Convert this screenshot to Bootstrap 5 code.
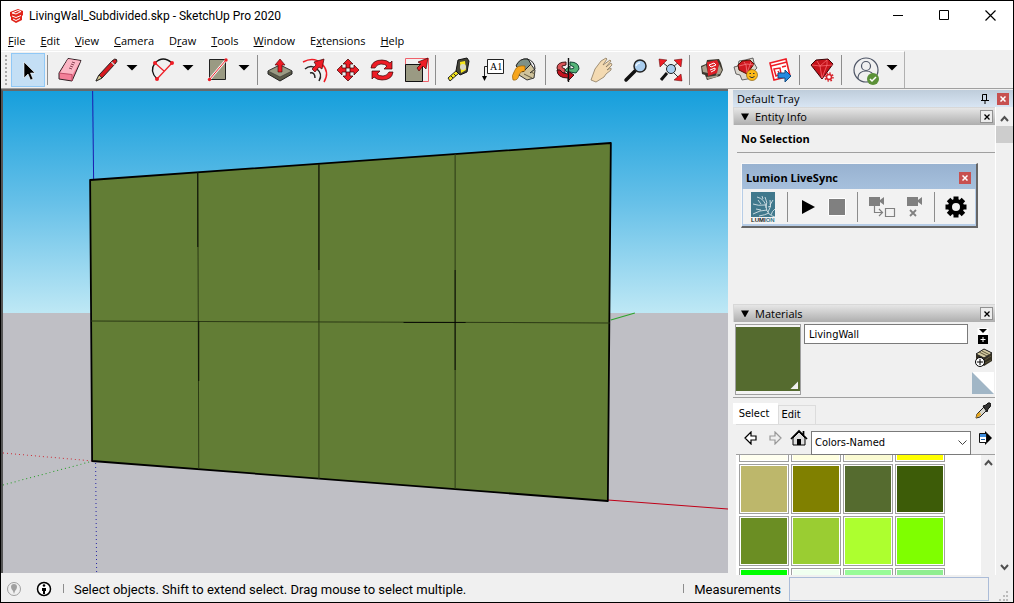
<!DOCTYPE html>
<html lang="en">
<head>
<meta charset="utf-8">
<meta name="viewport" content="width=device-width, initial-scale=1">
<title>LivingWall_Subdivided.skp - SketchUp Pro 2020</title>
<link href="https://cdn.jsdelivr.net/npm/bootstrap@5.3.0/dist/css/bootstrap.min.css" rel="stylesheet">
<style>
:root{--face:#f0f0f0;--line:#a0a0a0}
body{font-family:"Open Sans","Noto Sans",sans-serif;font-size:11px;line-height:16px;color:#000;background:var(--face);border:1px solid #000;overflow:hidden}
button{border:0;background:none;padding:0;color:inherit}
svg{display:block;flex:none}
.ui-text{font-family:Roboto,sans-serif}
.tahoma{font-family:"DejaVu Sans Condensed","DejaVu Sans",sans-serif}
.titlebar{height:29px;padding-left:8px;background:#fff}
.titlebar h1{font-size:12px;line-height:16px;font-weight:400;color:#000}
.winbtn{width:46px;height:29px}
.menubar{height:20px;padding-top:2px;background:#fff}
.menubar button{padding:0 7px;margin-right:1px}
.tools-row{height:39px;padding-top:1px;border-bottom:1px solid var(--line)}
.tools{border-right:1px solid #b0b0b0;border-top:1px solid #fff;padding:0 1px 0 4px}
.grip{width:2px;height:30px;margin-right:4px;background:repeating-linear-gradient(#a8a8a8 0 2px,transparent 2px 4px)}
.tool{width:34px;height:34px}
.tool.active{background:#c4dff5;outline:1px solid #90c8f6;outline-offset:-1px}
.tool svg{width:34px;height:34px}
.drop{width:18px;height:34px}
.drop::after{content:"";display:block;width:12px;height:6px;margin:-5px auto 0;background:#000;clip-path:polygon(0 0,100% 0,50% 100%)}
.pair{margin:0 2px}
.rule{width:1px;height:30px;margin:0 5px 0 2px;background:#8d8d8d}
.work{flex:1 1 0;min-height:0}
.fill{min-width:0;min-height:0}
.viewport{border:solid #696969;border-width:2px 0 0 2px;border-left-color:#555;margin-right:5px;background:#bfbfc5;min-width:0;margin-bottom:2px}
.viewport svg{width:100%;height:100%}
.tray{width:280px;padding-top:1px}
.tray-title{height:19px;padding:0 4px;background:linear-gradient(#bfcddb,#d8e5f3)}
.tray-title h2,.pane-head h3,.palette h4{font-size:11px;line-height:16px;font-weight:400}
.close-red{width:12px;height:12px;background:#c75050;color:#fff}
.pane-head{height:18px;padding:0 2px 0 7px;border:solid #d8d8d8;border-width:1px 0 0 1px;background:linear-gradient(#e6e6e6,#aeaeae)}
.tri{width:8px;height:7px;margin-right:6px;background:#000;clip-path:polygon(0 0,100% 0,50% 100%)}
.close-grey{width:13px;height:13px;border:1px solid #909090;background:#ececec}
.entity{height:179px}
.entity p{margin:0 0 0 4px;padding:6px 0 5px 4px;border-bottom:1px solid var(--line)}
.palette{width:237px;margin:10px 0 0 8px;border:1px solid #f8f8f8;border-right:2px solid #666;border-bottom:2px solid #666}
.palette header{height:25px;padding:2px 5px 0 4px;background:linear-gradient(#98b2d0,#a6c0dd)}
.palette-body{height:37px;padding:0 8px 0 6px;background:#f2f2f2;border:solid #b7cde7;border-width:0 1px 2px}
.palette-body .rule{margin:0}
.mat-top{height:76px;padding:2px 0 0 2px;border-bottom:1px solid var(--line)}
.preview{width:66px;height:71px;border:1px solid var(--line);background:#f4f4f4;padding-top:2px}
.preview div{height:64px;padding:2px;background:#556b2f}
.preview span{width:8px;height:8px;background:#f0f0f0;clip-path:polygon(100% 0,100% 100%,0 100%)}
.field{border:1px solid #7a7a7a;background:#fff;border-radius:0;font-size:11px;line-height:16px;color:#000}
.matname{height:20px;margin:0 0 0 3px;padding:0 4px;min-width:0}
.mat-side{width:27px;padding-left:2px}
.mat-tabs{height:26px}
.mat-tabs .tab-a{height:21px;width:45px;padding-right:3px;background:#fff}
.mat-tabs .tab-b{height:19px;width:38px;border:1px solid #dcdcdc;border-bottom:0;padding-right:12px}
.mat-nav{height:31px;margin-left:3px;padding-left:3px;border-top:1px solid #dcdcdc;border-bottom:1px solid var(--line)}
.mat-nav>button{width:24px;height:26px}
.mat-nav .details{padding-left:6px}
.libbox{margin-top:6px}
.lib{height:24px;width:100%;padding:0 3px;appearance:none}
.chev{right:4px;top:9px;pointer-events:none}
.swatches{margin-left:3px;background:#fff;min-height:0}
.grid-sw{display:grid;grid-template-columns:repeat(4,50px);gap:2px;margin:-43px auto 0 3px}
.swatch{height:50px;border:1px solid var(--line);padding:1px;background-clip:content-box}
.vscroll{width:14px;background:var(--face)}
.tray-scroll{width:18px;border-left:1px solid #fff}
.thumb{height:17px;background:#cdcdcd;margin-top:4px}
.status{height:27px;padding-left:5px;font-size:13px;line-height:18px}
.info{margin:0 11px 0 14px}
.tick{width:1px;height:9px;margin-right:10px;background:#8d8d8d}
.status label,.status .msg{padding-top:2px}
.vcb{width:200px;height:24px;border:1px solid #abbcd8;background:var(--face)}
</style>
</head>
<body class="vh-100 d-flex flex-column">
<header class="titlebar ui-text d-flex align-items-center">
  <svg width="16" height="16" viewBox="0 0 16 16"><path fill="#e1251b" d="M1 4 9 1l5 2v4l-1 1v4l-6 3-5-3v-3l-1-1z"/><path d="M3 5l6-2.500 3 1-5 2.500zM3 8l4 1.500 5-2M4 11l3 1.500 4-2" fill="none" stroke="#fff"/></svg>
  <h1 class="m-0 ps-1 flex-grow-1">LivingWall_Subdivided.skp - SketchUp Pro 2020</h1>
  <button class="winbtn" aria-label="Minimize"><svg class="mx-auto" width="11" height="11"><path d="M0 5.500h10" stroke="#000"/></svg></button>
  <button class="winbtn" aria-label="Maximize"><svg class="mx-auto" width="11" height="11"><path d="M.5.5h9v9h-9z" fill="none" stroke="#000"/></svg></button>
  <button class="winbtn" aria-label="Close"><svg class="mx-auto" width="11" height="11"><path d="M.5.5l10 10m0-10l-10 10" stroke="#000" stroke-width="1.200"/></svg></button>
</header>
<nav class="menubar d-flex align-items-center">
  <button><u>F</u>ile</button><button><u>E</u>dit</button><button><u>V</u>iew</button><button><u>C</u>amera</button><button>D<u>r</u>aw</button><button><u>T</u>ools</button><button><u>W</u>indow</button><button>E<u>x</u>tensions</button><button><u>H</u>elp</button>
</nav>
<div class="tools-row d-flex">
<div class="tools d-flex align-items-center">
  <span class="grip"></span>
  <button class="tool active" aria-label="Select"><svg viewBox="0 0 34 34"><path d="M13 9v16l4-4 2.500 6 2.500-1-2.500-6H24z" fill="#000" stroke="#fff" stroke-width=".6"/></svg></button>
  <span class="rule"></span>
  <button class="tool" aria-label="Eraser"><svg viewBox="0 0 34 34"><path d="M15 5.500 28 7.500 19 28 6 26v-6z" fill="#f37f98" stroke="#302025" stroke-linejoin="round"/><path d="M15 6 27.500 8l-8 13.500L7 20z" fill="#fbb6c4"/><path d="M6 20l13 1.500V28" fill="none" stroke="#c24d68"/><path d="M19 9l3 1M18 11l3 1M17 13l3 1M16 15l3 1" fill="none" stroke="#8b4354"/></svg></button>
  <span class="pair d-flex"><button class="tool" aria-label="Line"><svg viewBox="0 0 34 34"><path d="M7 28l3-6L23 8q3-3 4.500-1.500T26 11L13 25z" fill="#d7191f" stroke="#222"/><path d="M7 28l3-6 3 3z" fill="#d9cc93" stroke="#222" stroke-width=".8"/><path d="M22.500 9l3 3" stroke="#ccc" stroke-width="1.500"/></svg></button><button class="drop" aria-label="Line tools"></button></span>
  <span class="pair d-flex"><button class="tool" aria-label="Arc"><svg viewBox="0 0 34 34"><g fill="none"><path d="M12 26Q4 18 10 10q8-8 17 0" stroke="#111" stroke-width="1.300"/><path d="M12 26 27 10M10 10l9 8" stroke="#ee1c25" stroke-width="1.200"/></g><g fill="#ee1c25"><circle cx="12" cy="26" r="2"/><circle cx="10" cy="10" r="2"/><circle cx="27" cy="10" r="2"/></g></svg></button><button class="drop" aria-label="Arc tools"></button></span>
  <span class="pair d-flex"><button class="tool" aria-label="Rectangle"><svg viewBox="0 0 34 34"><path d="M8.500 6.500h16v20h-16z" fill="#9a9a83" stroke="#222"/><path d="M8 27 25 7" stroke="#fff" stroke-width="2.500"/><path d="M8 27 25 7" stroke="#ee1c25"/><circle cx="8.500" cy="26.500" r="1.700" fill="#ee1c25"/><circle cx="25" cy="7" r="1.700" fill="#ee1c25"/></svg></button><button class="drop" aria-label="Shape tools"></button></span>
  <span class="rule"></span>
  <button class="tool" aria-label="Push/Pull"><svg viewBox="0 0 34 34"><path d="M5 18 17 12l12 6v3l-12 7-12-7z" fill="#5b5b49" stroke="#222"/><path d="M5 18l12-6 12 6-12 6z" fill="#9a9a83" stroke="#333" stroke-width=".6"/><path d="M15 19v-7h-3l5-6 5 6h-3v7z" fill="#ee1c25" stroke="#400" stroke-width=".6"/></svg></button>
  <button class="tool" aria-label="Offset"><svg viewBox="0 0 34 34"><g fill="none" stroke-width="1.500"><path d="M6 9Q17 3 25 11t2 18" stroke="#ee1c25"/><path d="M8 16q6-5 12 0t2 12M13 20q5-1 5 5" stroke="#222"/></g><path d="M15 16l4-4-2-3 10-3-2 10-3-2-4 5z" fill="#ee1c25" stroke="#400" stroke-width=".7"/></svg></button>
  <button class="tool" aria-label="Move"><svg viewBox="0 0 34 34"><g fill="#ee1c25" stroke="#300" stroke-width=".7"><path id="mv" d="M17 6l5 5h-3v4h-4v-4h-3z"/><use href="#mv" transform="rotate(90 17 17)"/><use href="#mv" transform="rotate(180 17 17)"/><use href="#mv" transform="rotate(270 17 17)"/></g></svg></button>
  <button class="tool" aria-label="Rotate"><svg viewBox="0 0 34 34"><g fill="#ee1c25" stroke="#300" stroke-width=".7"><path id="rt" d="M6 15q1-8 11-8 5 0 8 3l2-2v8h-8l3-3q-2-2-6-2-4 0-6 4z"/><use href="#rt" transform="rotate(180 17 17)"/></g></svg></button>
  <button class="tool" aria-label="Scale"><svg viewBox="0 0 34 34"><path d="M6.500 5.500h23v23h-23z" fill="none" stroke="#f0616a"/><path d="M6.500 11.500h17v17h-17z" fill="#9a9a83" stroke="#111"/><path d="M18 15l4-4-3-2 10-4-2 11-3-3-4 5z" fill="#ee1c25" stroke="#400" stroke-width=".7"/></svg></button>
  <span class="rule"></span>
  <button class="tool" aria-label="Tape Measure"><svg viewBox="0 0 34 34"><path d="M18 20 9 28l-2-3 9-8z" fill="#f5e51b" stroke="#222"/><path d="M17 7l9-2 2 3-2 11-7 3-4-4z" fill="#444438" stroke="#111"/><path d="M19 9l5-1 1 9-5 3z" fill="#f5e51b"/><circle cx="22" cy="14" r="3" fill="#d8d8c6"/><path d="M10 23l2 2M13 21l2 2" stroke="#222"/></svg></button>
  <button class="tool" aria-label="Text"><svg viewBox="0 0 34 34"><path d="M12.500 6.500h16v14h-16z" fill="#fff" stroke="#222"/><path d="M12 13.500H9.500V24" fill="none" stroke="#222"/><path d="M7 23h5l-2.500 5z"/><text x="15" y="17" font-family="Liberation Serif,serif" font-size="10">A1</text></svg></button>
  <button class="tool" aria-label="Paint Bucket"><svg viewBox="0 0 34 34"><path d="M8 12q4-7 10-6l8 11-1 8-7 2-8-5z" fill="#cfc39c" stroke="#333"/><path d="M7 13q3-8 12-7l3 5-8 8z" fill="#7d9187" stroke="#222"/><path d="M18 6q8 2 8 10l-5 4" fill="none" stroke="#222"/><path d="M16 13q-8-1-10 4-4 6-2 10 5 1 6-5 1-4 6-4z" fill="#f6a51c" stroke="#8a5500" stroke-width=".6"/><path d="M15 21l8 4M22 19l4 2" stroke="#665d42"/></svg></button>
  <span class="rule"></span>
  <button class="tool" aria-label="Orbit"><svg viewBox="0 0 34 34"><path d="M15 9q-9 0-9 6 1 5 8 5v-4q-4-1-3-3l4-1z" fill="#d95458" stroke="#411"/><path d="M19 9q9 0 9 7l-3 4-6-1v3l-5-5 5-4v3q5 0 4-2l-4-2z" fill="#55b578" stroke="#143"/><path d="M6 17q0 8 11 8v3l6-6-6-4v3q-6 0-8-4z" fill="#c3131e" stroke="#311"/><path d="M17.500 5v24" stroke="#111" stroke-width="1.400"/></svg></button>
  <button class="tool" aria-label="Pan"><svg viewBox="0 0 34 34"><path d="M6 27l4-11 6-8 5-3 1 1-4 6 7-5 1 1-5 6 5-4 1 2-5 5 4-2v2l-5 4-2 3-8 5z" fill="#f3dab2" stroke="#8a7a60" stroke-width=".8"/></svg></button>
  <button class="tool" aria-label="Zoom"><svg viewBox="0 0 34 34"><path d="M16 18 7 27" stroke="#111" stroke-width="3.500" stroke-linecap="round"/><circle cx="21" cy="13" r="6" fill="#a9cdee" stroke="#222" stroke-width="1.500"/><path d="M17 13q1-3 4-3" stroke="#e9f4ff" stroke-width="1.500" fill="none"/></svg></button>
  <button class="tool" aria-label="Zoom Extents"><svg viewBox="0 0 34 34"><path d="M14 20 8 27" stroke="#111" stroke-width="3"/><path d="M9 9l5 4M26 9l-5 4M26 25l-5-5" stroke="#333"/><circle cx="18" cy="16" r="4.500" fill="#a9cdee" stroke="#222"/><path d="M6 6l8 1-7 7zM29 6l-8 1 7 7zM29 28l-8-1 7-6z" fill="#ee1c25" stroke="#500" stroke-width=".5"/></svg></button>
  <span class="rule"></span>
  <button class="tool" aria-label="3D Warehouse"><svg viewBox="0 0 34 34"><path d="M6 13l5-2 1-4 12-1 2 4 2 7-3 6-13 4-2-5-3-1z" fill="#3d382f"/><path d="M7 14l4-2 2 8-5-1zM24 11l3 6-2 4-4 1zM11 24l8-1 4-1-1 2-9 2z" fill="#aaa28f"/><path d="M12 9l10-2 2 4-2 9-9 3z" fill="#dd1f26"/><path d="M14 12l5-2 2 2-5 2zM15 17l5-2v2l-4 2" fill="none" stroke="#fff"/></svg></button>
  <button class="tool" aria-label="Extension Warehouse"><svg viewBox="0 0 34 34"><path d="M5 14l4-1 1-5 6-1 8-2 1 5 3 5-3 3-1 7-11 2-2-5-4-1z" fill="#dad6ce" stroke="#444" stroke-width=".8"/><path d="M9 12l4-4 8-1 4 4-7 10-8-4z" fill="#cf1820" stroke="#510"/><path d="M10 13l8-2 7 1M15 9l2 3 1 8 4-11" fill="none" stroke="#f4777c" stroke-width=".8"/><circle cx="23" cy="22" r="5.500" fill="#fcb917" stroke="#7a5300" stroke-width=".6"/><path d="M20.500 20.500h1.500m2 0h1.500m-5 3q2.500 2.500 5 0" fill="none" stroke="#333"/></svg></button>
  <button class="tool" aria-label="Send to LayOut"><svg viewBox="0 0 34 34"><path d="M7 10l16-4 4 17-16 4z" fill="#fff" stroke="#ee1c25" stroke-width="1.600"/><path d="M8 13l16-4M11 16l6-1 1 6-5 2zM19 14l4-1M15 18l1 2" fill="none" stroke="#ee1c25" stroke-width="1.500"/><path d="M15 20h7v-3l6 6-6 6v-4h-7z" fill="#2489df" stroke="#124a80"/></svg></button>
  <span class="rule"></span>
  <button class="tool" aria-label="Extension Manager"><svg viewBox="0 0 34 34"><path d="M6 12l5-5 12-1 5 5-11 15z" fill="#c4121a" stroke="#3a0508"/><path d="M7 12l8 1 13-1M12 8l3 5 2 12 5-13V7M15 13l7-6" fill="none" stroke="#ff7379" stroke-width=".7"/><circle cx="24" cy="24" r="2.500" fill="#fff" stroke="#d6222a" stroke-width="1.500"/><circle cx="24" cy="24" r="4" fill="none" stroke="#d6222a" stroke-width="1.500" stroke-dasharray="1.600 1.500"/></svg></button>
  <span class="rule"></span>
  <span class="pair d-flex"><button class="tool" aria-label="Account"><svg viewBox="0 0 34 34"><g fill="none" stroke="#4e5566" stroke-width="1.200"><circle cx="17" cy="17" r="12"/><circle cx="17" cy="13" r="4.500"/><path d="M9 26v-2q1-6 8-6t8 6"/></g><circle cx="24" cy="26" r="6" fill="#5b9138"/><path d="M21 26l2 2 4-4" fill="none" stroke="#fff" stroke-width="1.500"/></svg></button><button class="drop" aria-label="Account menu"></button></span>
</div>
</div>
<main class="work d-flex">
<section class="viewport flex-grow-1">
  <svg viewBox="3 91 724 482" preserveAspectRatio="none" role="img" aria-label="Model of a subdivided green wall">
    <defs><linearGradient id="sky" x2="0" y2="1"><stop stop-color="#169fdc"/><stop offset=".5" stop-color="#66c0e8"/><stop offset="1" stop-color="#bee8f5"/></linearGradient></defs>
    <path fill="url(#sky)" d="M3 91h724v222H3z"/><path fill="#bfbfc5" d="M3 313h724v260H3z"/>
    <path d="M92.500 91 93.500 180" stroke="#1b1bb0"/>
    <path d="M610 320l24-7" stroke="#2ba52b"/><path d="M607 500l120 9" stroke="#c00018"/>
    <path d="M3 453l90 8" stroke="#cb2b35" stroke-dasharray="1 3"/><path d="M3 485l90-24" stroke="#249c24" stroke-dasharray="1 3"/>
    <path d="M95.500 463l1 110" stroke="#2525a5" stroke-dasharray="1 3"/>
    <path d="M90 180 610 143l-3 358-515-40z" fill="#627d35" stroke="#000" stroke-width="1.800" stroke-linejoin="round"/>
    <g stroke="#2c3a15"><path d="M197.500 172l1 297M318.500 164v315M454.500 154v335M91 321l518 2"/></g>
    <path d="M197.500 172v75M198.500 321v60M318.500 164v106M454.500 270v100M403 322.500h62" stroke="#000" stroke-width=".8"/>
  </svg>
</section>
<aside class="tray d-flex flex-column flex-shrink-0">
  <div class="tray-title d-flex align-items-center"><h2 class="m-0 flex-grow-1">Default Tray</h2>
    <button class="me-2" aria-label="Pin"><svg width="8" height="10"><path d="M1.500 6V.5h4V6M0 6.500h8M4 7v3M5.500 0v6" fill="none" stroke="#000"/></svg></button>
    <button class="close-red" aria-label="Close tray"><svg class="mx-auto" width="6" height="6"><path d="M.5.5l5 5m0-5l-5 5" stroke="#fff" stroke-width="1.500"/></svg></button>
  </div>
  <div class="d-flex flex-grow-1 fill">
  <div class="d-flex flex-column flex-grow-1 fill">
    <div class="pane-head d-flex align-items-center flex-shrink-0"><span class="tri"></span><h3 class="m-0 flex-grow-1">Entity Info</h3><button class="close-grey" aria-label="Close Entity Info"><svg class="mx-auto" width="6" height="6"><path d="M.5.5l5 5m0-5l-5 5" stroke="#000" stroke-width="1.300"/></svg></button></div>
    <div class="entity flex-shrink-0">
      <p class="fw-bold">No Selection</p>
      <section class="palette">
        <header class="d-flex align-items-center"><h4 class="m-0 flex-grow-1 fw-bold">Lumion LiveSync</h4><button class="close-red" aria-label="Close LiveSync"><svg class="mx-auto" width="6" height="6"><path d="M.5.5l5 5m0-5l-5 5" stroke="#fff" stroke-width="1.500"/></svg></button></header>
        <div class="palette-body d-flex align-items-center justify-content-between">
          <button aria-label="Lumion"><svg width="28" height="32" viewBox="0 0 28 32"><path d="M2 1h24v25H2z" fill="#40788c"/><path d="M26 26q-8-2-9-10T8 6M16 14q-7 1-12-1M18 19q-7 0-14 4M20 22q-4 2-10 3M17 17q2-6-1-11M19 21q4-5 2-12M22 24q1-4 4-6M12 13l-3-4M21 14l3-5M12 19l-5-1M19 16l3-1M14 8l-1-3" fill="none" stroke="#e9f0f2" stroke-width=".8"/><text x="2" y="31" font-family="Liberation Sans,sans-serif" font-weight="700" font-size="6" fill="#222">LUMI<tspan fill="#40788c">ON</tspan></text></svg></button>
          <span class="rule"></span>
          <button aria-label="Play"><svg width="20" height="20"><path d="M4 3l13 7-13 7z"/></svg></button>
          <button aria-label="Stop"><svg width="18" height="18"><path d="M.5.5h17v17H.5z" fill="#808080" stroke="#fff"/></svg></button>
          <span class="rule"></span>
          <button aria-label="Sync camera"><svg width="28" height="24"><path d="M1 2h11v3l4-3v8l-4-3v4H1z" fill="#808080"/><path d="M6.500 11v6.500H14M11 14l3.500 3.500L11 21M17.500 13.500h9v8h-9z" fill="none" stroke="#808080" stroke-width="1.200"/></svg></button>
          <button aria-label="Remove camera"><svg width="18" height="24"><path d="M1 2h11v3l4-3v8l-4-3v4H1z" fill="#808080"/><path d="M4 15l6 6m0-6l-6 6" stroke="#808080" stroke-width="1.800"/></svg></button>
          <span class="rule"></span>
          <button aria-label="Settings"><svg width="22" height="22" viewBox="-11 -11 22 22"><circle r="6" fill="none" stroke="#000" stroke-width="4"/><g stroke="#000" stroke-width="5"><path d="M0-10.500v4M0 6.500v4M-10.500 0h4M6.500 0h4"/><path transform="rotate(45)" d="M0-10.500v4M0 6.500v4M-10.500 0h4M6.500 0h4"/></g></svg></button>
        </div>
      </section>
    </div>
    <div class="pane-head d-flex align-items-center flex-shrink-0"><span class="tri"></span><h3 class="m-0 flex-grow-1">Materials</h3><button class="close-grey" aria-label="Close Materials"><svg class="mx-auto" width="6" height="6"><path d="M.5.5l5 5m0-5l-5 5" stroke="#000" stroke-width="1.300"/></svg></button></div>
    <div class="mat-top d-flex align-items-start flex-shrink-0">
      <div class="preview"><div class="d-flex justify-content-end align-items-end"><span></span></div></div>
      <input class="field matname tahoma flex-grow-1" aria-label="Material name" value="LivingWall">
      <div class="mat-side d-flex flex-column align-items-center">
        <button class="mt-1" aria-label="Secondary pane"><svg width="12" height="16"><path d="M.5 0h11v7H.500z" fill="#fff"/><path d="M2 1h8L6 5zM1 7h10v9H1z"/><path d="M6 9v5M3.500 11.500h5" stroke="#fff"/></svg></button>
        <button class="mt-1" aria-label="Create material"><svg width="20" height="20"><path d="M3 6l8-5 8 4v8l-8 5-8-5z" fill="#332f22"/><path d="M3 6l8-5 8 4-8 5z" fill="#d4cba2" stroke="#222"/><path d="M6 4l8 4M9 3l8 4M12 12l6-4M12 15l6-3" stroke="#5f573a"/><circle cx="7" cy="14" r="4.500" fill="#fff" stroke="#000"/><path d="M7 11v6M4 14h6" stroke="#000"/></svg></button>
        <button class="mt-1" aria-label="Default material"><svg width="22" height="22"><path d="M0 0h22v22H0z" fill="#fff"/><path d="M0 0l22 22H0z" fill="#a1b6c6"/></svg></button>
      </div>
    </div>
    <div class="mat-tabs tahoma d-flex align-items-end flex-shrink-0">
      <button class="tab-a">Select</button><button class="tab-b">Edit</button>
      <button class="ms-auto me-1 align-self-center" aria-label="Sample paint"><svg width="16" height="18" viewBox="0 0 16 18"><path d="M1 16l1-4 7-7 3 3-7 7z" fill="#d6d6cf" stroke="#222"/><path d="M1 16l1-4 3-2 1 3z" fill="#e7a61b"/><path d="M8 4l3-1q2-3 4-2t0 4l-2 2-1 3z" fill="#333" stroke="#111"/></svg></button>
    </div>
    <div class="mat-nav tahoma d-flex align-items-start flex-shrink-0">
      <button aria-label="Back"><svg class="mx-auto" width="14" height="14"><path d="M1 7l6-6v4h5v4H7v4z" fill="#fff" stroke="#000" stroke-width="1.200"/></svg></button><button aria-label="Forward"><svg class="mx-auto" width="14" height="14"><path d="M13 7L7 1v4H2v4h5v4z" fill="#eee" stroke="#999" stroke-width="1.200"/></svg></button><button aria-label="In model"><svg class="mx-auto" width="18" height="18"><path d="M3 9l6-6 6 6v7H3z" fill="#ddd" stroke="#000"/><path d="M1 10l8-8 8 8M13.500 2v4" fill="none" stroke="#000" stroke-width="1.700"/><path d="M7 10h4v6H7z"/></svg></button>
      <div class="position-relative flex-grow-1 libbox"><select class="field lib" aria-label="Material library"><option>Colors-Named</option></select><svg class="chev position-absolute" width="9" height="6"><path d="M.5.5l4 4 4-4" fill="none" stroke="#444"/></svg></div>
      <button class="details" aria-label="Details"><svg width="18" height="18"><path d="M8 2l7 7-7 7z"/><path d="M2.500 4.500h7v9h-7z" fill="#fff" stroke="#111"/><path d="M3 5h6v3H3z" fill="#3f8fe0"/><path d="M4 10.500h4" stroke="#1b5fa5"/></svg></button>
    </div>
    <div class="swatches flex-grow-1 d-flex overflow-hidden">
      <div class="grid-sw" id="swatches"></div>
      <div class="vscroll"><svg class="mx-auto mt-1" width="9" height="7"><path d="M1 6l3.500-4L8 6" fill="none" stroke="#505050" stroke-width="2"/></svg></div>
    </div>
  </div>
  <div class="tray-scroll d-flex flex-column">
    <svg class="mx-auto mt-2" width="9" height="7"><path d="M1 6l3.500-4L8 6" fill="none" stroke="#505050" stroke-width="2"/></svg>
    <div class="thumb"></div>
    <svg class="mx-auto mt-auto mb-1" width="9" height="7"><path d="M1 1l3.500 4L8 1" fill="none" stroke="#505050" stroke-width="2"/></svg>
  </div>
  </div>
</aside>
</main>
<footer class="status ui-text d-flex align-items-center">
  <svg width="16" height="16" viewBox="0 0 16 16"><circle cx="8" cy="8" r="6.500" fill="none" stroke="#a0a0a0"/><path d="M8 13l-1-3q-2-2-2-4 0-3 3-3t3 3q0 2-2 4z" fill="#a0a0a0"/></svg>
  <svg class="info" width="16" height="16" viewBox="0 0 16 16"><circle cx="8" cy="8" r="6.500" fill="#fff" stroke="#000" stroke-width="1.500"/><circle cx="8" cy="4.500" r="1.300"/><path d="M6 7h4v3H9v3H7v-3H6z"/></svg>
  <span class="tick"></span><span class="msg flex-grow-1">Select objects. Shift to extend select. Drag mouse to select multiple.</span>
  <span class="tick"></span><label class="me-2" for="vcb">Measurements</label><input class="vcb" id="vcb">
  <svg class="align-self-end ms-2 me-1" width="12" height="12"><path d="M9 1h2v2H9zM6 5h2v2H6zM9 5h2v2H9zM2 9h2v2H2zM6 9h2v2H6zM9 9h2v2H9z" fill="#bcbcbc"/></svg>
</footer>
<script src="https://cdn.jsdelivr.net/npm/bootstrap@5.3.0/dist/js/bootstrap.bundle.min.js"></script>
<script>
const colors = ['#fffff0','#ffffe0','#fafad2','#ffff00','#bdb76b','#808000','#556b2f','#3d5c08',
  '#6b8e23','#9acd32','#adff2f','#7fff00','#00ff00','#f0fff0','#98fb98','#90ee90'];
document.getElementById('swatches').innerHTML = colors.map(c =>
  `<button class="swatch" style="background-color:${c}" aria-label="${c}"></button>`).join('');
</script>
</body>
</html>
